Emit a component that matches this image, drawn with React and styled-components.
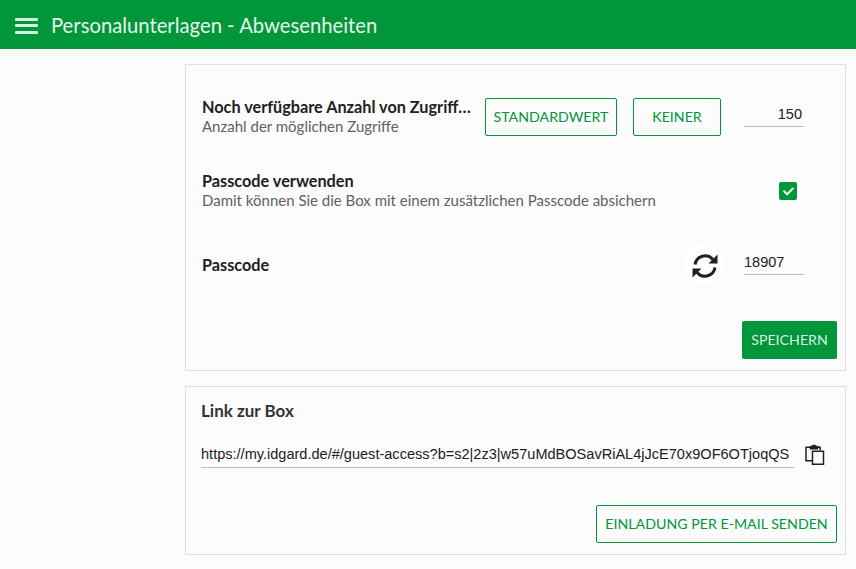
import styled, { createGlobalStyle } from "styled-components";
import { FaCheck } from "react-icons/fa";

const GlobalStyle = createGlobalStyle`
  html, body {
    margin: 0;
    padding: 0;
    height: 100%;
    background-color: #fcfcfc;
    font-family: "Lato", "Liberation Sans", sans-serif;
    overflow: hidden;
  }
`;

const TopBar = styled.header`
  height: 49px;
  background-color: #009639;
  display: flex;
  align-items: center;
  padding-left: 15px;
  color: #e4f5ea;
`;

const MenuIcon = styled.div`
  width: 23px;
  height: 16px;
  margin-right: 13px;
  margin-top: 2px;
  display: flex;
  flex-direction: column;
  justify-content: space-between;

  span {
    display: block;
    height: 3px;
    background-color: #d8f0e0;
    border-radius: 1px;
  }
`;

const PageTitle = styled.h1`
  margin: 0;
  font-size: 20.25px;
  font-weight: 400;
`;

const Content = styled.main`
  width: 661px;
  margin: 15px 0 0 185px;
  display: flex;
  flex-direction: column;
  gap: 15px;
`;

const Card = styled.section`
  border: 1px solid #e0e0e0;
  box-sizing: border-box;
  padding: ${(p) => p.$padding};
`;

const SettingRow = styled.div`
  height: 74px;
  display: flex;
  align-items: center;
  padding-right: 33px;
`;

const LabelColumn = styled.div`
  flex: 1;
  min-width: 0;
  margin-right: 11px;
  padding-bottom: 2px;
`;

const Label = styled.div`
  font-size: 16.25px;
  font-weight: 700;
  line-height: 19px;
  color: #212121;
  white-space: nowrap;
  overflow: hidden;
  text-overflow: ellipsis;
`;

const Hint = styled.div`
  font-size: 15px;
  line-height: 20px;
  color: #616161;
  white-space: nowrap;
`;

const OutlineButton = styled.button`
  box-sizing: border-box;
  height: 38px;
  width: ${(p) => p.$width}px;
  margin-left: ${(p) => p.$gap || 0}px;
  padding: 0 0 2px;
  background: transparent;
  border: 1px solid #009639;
  border-radius: 2px;
  color: #009639;
  font-family: inherit;
  font-size: 14.2px;
  font-weight: 400;
`;

const SolidButton = styled.button`
  box-sizing: border-box;
  height: 38px;
  width: 95px;
  padding: 0 0 2px;
  background-color: #009639;
  border: none;
  border-radius: 2px;
  color: #d8f0e0;
  font-family: inherit;
  font-size: 14.2px;
`;

const Field = styled.input`
  box-sizing: border-box;
  width: ${(p) => p.$width}px;
  height: 20px;
  margin-left: ${(p) => p.$gap || 0}px;
  padding: 0 ${(p) => (p.$right ? 2 : 0)}px ${(p) => (p.$size ? 7 : 5)}px 0;
  background: transparent;
  border: none;
  border-bottom: 1px solid #bdbdbd;
  outline: none;
  color: #212121;
  font-family: "Liberation Sans", Arial, sans-serif;
  font-size: ${(p) => p.$size || 14.5}px;
  text-align: ${(p) => (p.$right ? "right" : "left")};
`;

const CheckBox = styled.span`
  width: 18px;
  height: 18px;
  margin-right: 7px;
  border-radius: 2px;
  background-color: #009639;
  color: #e4f5ea;
  font-size: 11px;
  display: flex;
  align-items: center;
  justify-content: center;
`;

const RoundIcon = styled.span`
  box-sizing: border-box;
  width: 40px;
  height: 40px;
  padding: 1px 0 0 3px;
  border-radius: 50%;
  background-color: #fff;
  display: flex;
  align-items: center;
  justify-content: center;
`;

const ActionRow = styled.div`
  display: flex;
  justify-content: flex-end;
  margin-top: ${(p) => p.$top}px;
`;

const BoxTitle = styled.h2`
  margin: 0;
  font-size: 17px;
  font-weight: 700;
  line-height: 20px;
  color: #333;
`;

const LinkRow = styled.div`
  display: flex;
  align-items: flex-end;
  margin-top: 23px;
`;

const CopyIcon = styled.svg`
  width: 20px;
  height: 21px;
  margin-left: 11px;
  margin-bottom: 3px;
`;

export default function App() {
  return (
    <>
      <GlobalStyle />
      <TopBar>
        <MenuIcon>
          <span />
          <span />
          <span />
        </MenuIcon>
        <PageTitle>Personalunterlagen - Abwesenheiten</PageTitle>
      </TopBar>
      <Content>
        <Card $padding="15px 8px 11px 16px">
          <SettingRow>
            <LabelColumn>
              <Label>Noch verfügbare Anzahl von Zugriffen</Label>
              <Hint>Anzahl der möglichen Zugriffe</Hint>
            </LabelColumn>
            <OutlineButton $width={132}>STANDARDWERT</OutlineButton>
            <OutlineButton $width={88} $gap={16}>KEINER</OutlineButton>
            <Field $width={60} $gap={23} $right defaultValue="150" />
          </SettingRow>
          <SettingRow>
            <LabelColumn>
              <Label>Passcode verwenden</Label>
              <Hint>Damit können Sie die Box mit einem zusätzlichen Passcode absichern</Hint>
            </LabelColumn>
            <CheckBox>
              <FaCheck />
            </CheckBox>
          </SettingRow>
          <SettingRow>
            <LabelColumn>
              <Label>Passcode</Label>
            </LabelColumn>
            <RoundIcon>
              <svg width="26" height="26" viewBox="0 0 26 26" fill="#212121">
                <path d="M3 11.5A10.3 10.3 0 0 1 21 6.5" fill="none" stroke="#212121" strokeWidth="3" />
                <path d="M25.5 1.5v9h-9z" />
                <path d="M23 14.5A10.3 10.3 0 0 1 5 19.5" fill="none" stroke="#212121" strokeWidth="3" />
                <path d="M.5 24.5v-9h9z" />
              </svg>
            </RoundIcon>
            <Field $width={60} $gap={21} defaultValue="18907" />
          </SettingRow>
          <ActionRow $top={19}>
            <SolidButton>SPEICHERN</SolidButton>
          </ActionRow>
        </Card>
        <Card $padding="14px 8px 11px 15px">
          <BoxTitle>Link zur Box</BoxTitle>
          <LinkRow>
            <Field
              $width={593}
              $size={14.55}
              defaultValue="https://my.idgard.de/#/guest-access?b=s2|2z3|w57uMdBOSavRiAL4jJcE70x9OF6OTjoqQS"
            />
            <CopyIcon viewBox="0 0 20 21" fill="none" stroke="#212121" strokeWidth="1.5">
              <path d="M5.5 3.2H1v13.6h6" />
              <path d="M12 3.2h3.2v3" />
              <path d="M5.5 4.8V2.4h1.8a1.8 1.8 0 0 1 3.4 0h1.8v2.4z" fill="#212121" />
              <path d="M7.5 7.2h11v13h-11z" />
            </CopyIcon>
          </LinkRow>
          <ActionRow $top={37}>
            <OutlineButton $width={241}>EINLADUNG PER E-MAIL SENDEN</OutlineButton>
          </ActionRow>
        </Card>
      </Content>
    </>
  );
}
